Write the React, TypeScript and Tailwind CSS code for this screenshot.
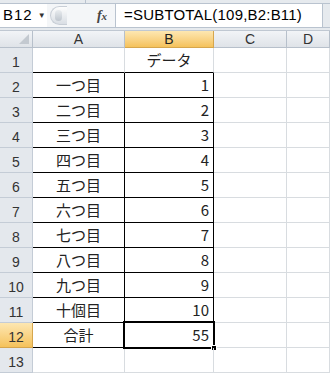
import React from "react";

const rows: [string, string][] = [
  ["", "データ"],
  ["一つ目", "1"],
  ["二つ目", "2"],
  ["三つ目", "3"],
  ["四つ目", "4"],
  ["五つ目", "5"],
  ["六つ目", "6"],
  ["七つ目", "7"],
  ["八つ目", "8"],
  ["九つ目", "9"],
  ["十個目", "10"],
  ["合計", "55"],
  ["", ""],
];

const font = { fontFamily: '"Noto Sans CJK JP", "Noto Sans", sans-serif' };

export default function App() {
  return (
    <div
      className="w-[330px] h-[376px] overflow-hidden bg-white text-[#222]"
      style={{ fontFamily: '"Liberation Sans", "Noto Sans CJK JP", sans-serif' }}
    >
      {/* top strip */}
      <div className="h-[4px] flex bg-[#e6eaee] border-b border-[#b9c3cf]">
        <div className="w-[86px] border-r border-[#b9c3cf]" />
      </div>
      {/* formula bar */}
      <div className="h-[24px] flex items-stretch bg-white border-b border-[#b9c3cf]">
        <div className="w-[47px] flex items-center pl-[3px] text-[15px] text-black">
          <span className="tracking-[1px]">B12</span>
          <span className="ml-[5px] text-[8px] text-[#333]">▼</span>
        </div>
        <div className="flex-1 flex items-center pl-[3px] bg-[#f4f6f8]">
          <div className="w-[17px] h-[19px] rounded-l-full border border-[#c8ced6] border-r-0 bg-gradient-to-b from-[#fdfdfd] to-[#d9dee4] flex items-center pl-[4px]">
            <div className="w-[7px] h-[11px] rounded-full bg-gradient-to-b from-[#e9ecef] to-[#bfc6ce]" />
          </div>
          <div className="flex-1" />
          <div
            className="w-[26px] text-[14px] italic font-bold text-[#444] text-center"
            style={{ fontFamily: '"Liberation Serif", serif' }}
          >
            f<span className="text-[11px]">x</span>
          </div>
        </div>
        <div className="w-[208px] border-l border-[#b9c3cf] flex items-center pl-[8px] text-[15px] text-black tracking-[0.2px] border-r">
          =SUBTOTAL(109,B2:B11)
        </div>
        <div className="w-[7px] bg-[#e6eaee]" />
      </div>
      <div className="h-[3px] bg-[#e6eaee] border-b border-[#c0c8d2]" />

      {/* grid */}
      <div className="grid grid-cols-[33px_92px_89px_73px_43px] grid-rows-[17px_repeat(13,25px)]">
        {/* header row */}
        <div className="relative bg-gradient-to-b from-[#f2f4f7] to-[#dfe3e8] border-r border-b border-[#b7c0cb]">
          <div className="absolute right-[3px] bottom-[3px] w-0 h-0 border-l-[10px] border-l-transparent border-b-[10px] border-b-[#c3c9d0]" />
        </div>
        {["A", "B", "C", "D"].map((c) => (
          <div
            key={c}
            className={
              "flex items-end justify-center text-[14px] leading-[16px] border-r border-b " +
              (c === "B"
                ? "bg-gradient-to-b from-[#fde7b1] to-[#f5c25a] border-[#d6a64d] text-[#222]"
                : "bg-gradient-to-b from-[#f2f4f7] to-[#dfe3e8] border-[#b7c0cb] text-[#333]")
            }
          >
            {c}
          </div>
        ))}
        {rows.map(([a, b], i) => {
          const r = i + 1;
          const inBox = r >= 1 && r <= 12;
          const boxed = r >= 2 && r <= 12;
          const sel = r === 12;
          return (
            <React.Fragment key={r}>
              <div
                className={
                  "flex items-end justify-center pb-[2px] text-[14px] leading-[16px] text-[#333] border-r border-b " +
                  (sel
                    ? "bg-gradient-to-b from-[#fde7b1] to-[#f5c25a] border-[#d6a64d]"
                    : "bg-[#e4e8ed] border-[#c4ccd6]")
                }
              >
                {r}
              </div>
              <div
                className={
                  "flex items-end justify-center pb-[4px] text-[15px] leading-[17px] border-b border-r " +
                  (inBox ? "border-b-black " : "border-b-[#d8dce0] ") +
                  (boxed ? "border-r-black" : "border-r-[#d8dce0]")
                }
                style={font}
              >
                {a}
              </div>
              <div
                className={
                  "relative flex items-end pb-[4px] text-[15px] leading-[17px] border-b border-r " +
                  (r === 1 ? "justify-center " : "justify-end pr-[4px] ") +
                  (inBox ? "border-b-black " : "border-b-[#d8dce0] ") +
                  (boxed ? "border-r-black" : "border-r-[#d8dce0]")
                }
                style={r === 1 ? font : { fontFamily: '"Noto Sans CJK JP", sans-serif' }}
              >
                {b}
                {sel && (
                  <>
                    <div className="absolute -left-[2px] -top-[2px] -right-[2px] -bottom-[2px] border-2 border-black pointer-events-none" />
                    <div className="absolute left-0 top-0 right-0 bottom-0 border border-white pointer-events-none" />
                    <div className="absolute -right-[4px] -bottom-[4px] w-[6px] h-[6px] bg-black border border-white" />
                  </>
                )}
              </div>
              <div className="border-r border-b border-[#d8dce0]" />
              <div className="border-r border-b border-[#d8dce0]" />
            </React.Fragment>
          );
        })}
      </div>
    </div>
  );
}
